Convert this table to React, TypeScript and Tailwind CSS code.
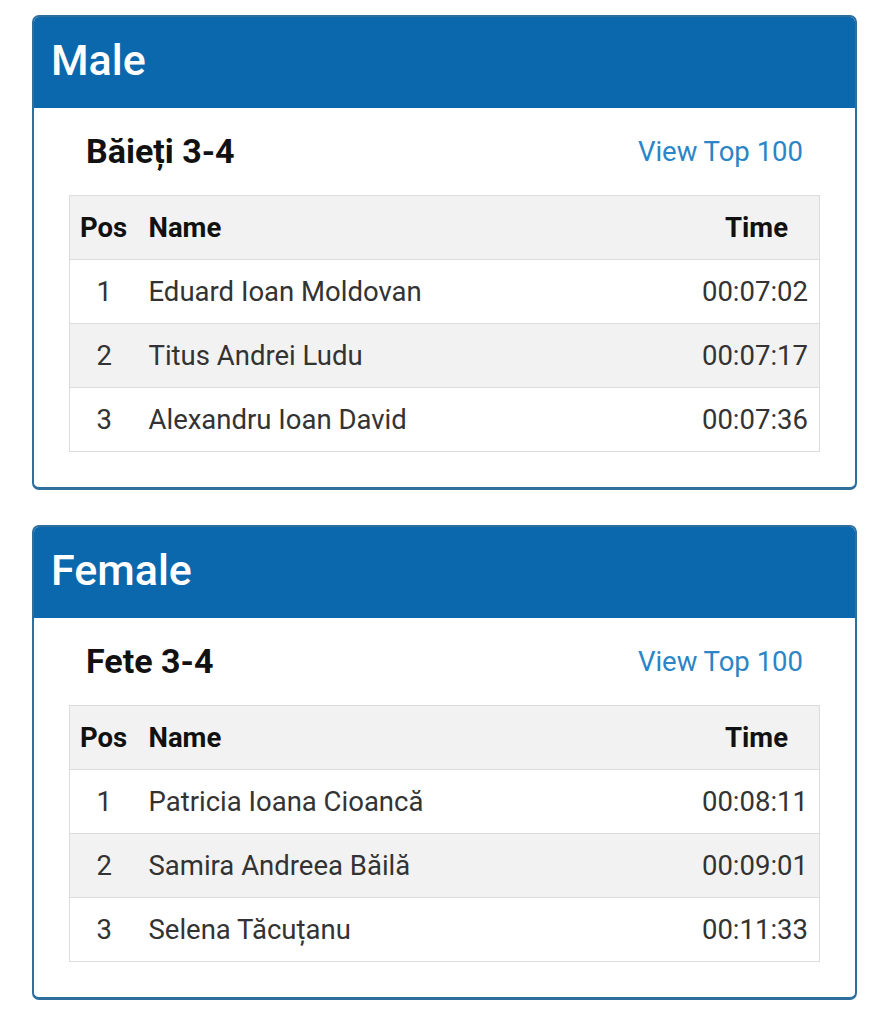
import React from 'react'

type Row = { pos: number; name: string; time: string }

type Section = { title: string; category: string; rows: Row[] }

const sections: Section[] = [
  {
    title: 'Male',
    category: 'Băieți 3-4',
    rows: [
      { pos: 1, name: 'Eduard Ioan Moldovan', time: '00:07:02' },
      { pos: 2, name: 'Titus Andrei Ludu', time: '00:07:17' },
      { pos: 3, name: 'Alexandru Ioan David', time: '00:07:36' },
    ],
  },
  {
    title: 'Female',
    category: 'Fete 3-4',
    rows: [
      { pos: 1, name: 'Patricia Ioana Cioancă', time: '00:08:11' },
      { pos: 2, name: 'Samira Andreea Băilă', time: '00:09:01' },
      { pos: 3, name: 'Selena Tăcuțanu', time: '00:11:33' },
    ],
  },
]

function ResultsCard({ title, category, rows }: Section) {
  return (
    <div className="overflow-hidden rounded-[7px] border-2 border-b-[3px] border-[#2f6f9e] bg-white">
      {/* Header */}
      <div className="flex h-[91px] items-center bg-[#0b68ad] px-[17px] pb-[4px]">
        <h2 className="text-[43px] font-medium leading-none text-white">{title}</h2>
      </div>

      <div className="px-[35px] pb-[35px]">
        {/* Category line */}
        <div className="flex h-[87px] items-center justify-between pl-[17px] pr-[17px]">
          <h3 className="text-[34px] font-bold text-[#111]">{category}</h3>
          <a className="text-[27.5px] text-[#2b85c6]">View Top 100</a>
        </div>

        {/* Table */}
        <table className="w-full border-collapse border border-[#dcdcdc] text-[27.5px]">
          <thead>
            <tr className="h-[64px] bg-[#f2f2f2]">
              <th className="w-[79px] pl-[10px] text-left font-bold text-[#111]">Pos</th>
              <th className="text-left font-bold text-[#111]">Name</th>
              <th className="pr-[31px] text-right font-bold text-[#111]">Time</th>
            </tr>
          </thead>
          <tbody>
            {rows.map((r, i) => (
              <tr
                key={r.pos}
                className={`h-[64px] border-t border-[#dcdcdc] ${i % 2 === 1 ? 'bg-[#f2f2f2]' : 'bg-white'}`}
              >
                <td className="pl-[10px] pr-[20px] text-center text-[#333]">{r.pos}</td>
                <td className="text-[#333]">{r.name}</td>
                <td className="pr-[11px] text-right text-[#333]">{r.time}</td>
              </tr>
            ))}
          </tbody>
        </table>
      </div>
    </div>
  )
}

export default function App() {
  return (
    <div
      className="min-h-[1024px] bg-white pl-[32px] pr-[30px] pt-[15px]"
      style={{ fontFamily: 'Roboto, "Noto Sans", sans-serif' }}
    >
      <div className="flex flex-col gap-[35px]">
        {sections.map((s) => (
          <ResultsCard key={s.title} {...s} />
        ))}
      </div>
    </div>
  )
}
